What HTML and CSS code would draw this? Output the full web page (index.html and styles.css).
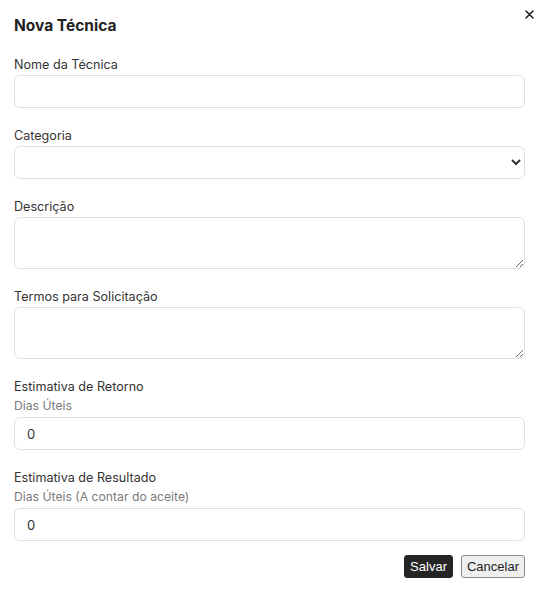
FILE: index.html
```html
<!DOCTYPE html>
<html lang="pt-br">
<head>
    <meta charset="UTF-8">
    <meta name="viewport" content="width=device-width, initial-scale=1.0">
    <title>Nova Técnica</title>
    <link rel="stylesheet" href="styles.css">
</head>
<body>

    <div class="modal">
        <button class="btn-fechar" type="button" aria-label="Fechar">
            <svg width="9" height="9" viewBox="0 0 9 9">
                <path d="M1 1 L8 8 M8 1 L1 8" stroke="#222" stroke-width="1.6" stroke-linecap="round"/>
            </svg>
        </button>

        <h2 class="titulo">Nova Técnica</h2>

        <div class="campo">
            <label for="nome">Nome da Técnica</label>
            <input type="text" id="nome">
        </div>

        <div class="campo">
            <label for="categoria">Categoria</label>
            <select id="categoria">
                <option></option>
            </select>
        </div>

        <div class="campo">
            <label for="descricao">Descrição</label>
            <textarea id="descricao"></textarea>
        </div>

        <div class="campo">
            <label for="termos">Termos para Solicitação</label>
            <textarea id="termos"></textarea>
        </div>

        <div class="campo">
            <label for="retorno">Estimativa de Retorno</label>
            <span class="dica">Dias Úteis</span>
            <input type="text" id="retorno" value="0">
        </div>

        <div class="campo">
            <label for="resultado">Estimativa de Resultado</label>
            <span class="dica">Dias Úteis (A contar do aceite)</span>
            <input type="text" id="resultado" value="0">
        </div>

        <div class="acoes">
            <button type="button" class="btn-salvar">Salvar</button>
            <button type="button" class="btn-cancelar">Cancelar</button>
        </div>
    </div>

</body>
</html>
```

FILE: styles.css
```css
body {
    margin: 0;
    font-family: Inter, 'Noto Sans', sans-serif;
    background-color: #ffffff;
    color: #333;
}
.modal {
    position: relative;
    padding: 14px 16px 14px 14px;
}
.btn-fechar {
    position: absolute;
    top: 5px;
    right: 2px;
    width: 20px;
    height: 18px;
    padding: 0;
    border: none;
    background: none;
    display: flex;
    align-items: center;
    justify-content: center;
    cursor: pointer;
}
.titulo {
    margin: 0 0 17px 0;
    font-size: 15.5px;
    line-height: 24px;
    font-weight: 700;
    color: #222;
}
.campo {
    display: flex;
    flex-direction: column;
    margin-bottom: 18px;
}
.campo label {
    font-size: 12.6px;
    line-height: 20px;
    color: #333;
}
.dica {
    font-size: 12.2px;
    line-height: 17px;
    color: #7a7a7a;
    margin-bottom: 3px;
}
.campo input,
.campo select,
.campo textarea {
    box-sizing: border-box;
    width: 100%;
    height: 33px;
    padding: 0 12px;
    border: 1px solid #dcdfe3;
    border-radius: 6px;
    font-family: Inter, 'Noto Sans', sans-serif;
    font-size: 13px;
    color: #333;
    background-color: #fff;
}
.campo textarea {
    height: 52px;
    padding: 6px 12px;
}
.acoes {
    display: flex;
    justify-content: flex-end;
    gap: 8px;
    margin-top: -4px;
}
.acoes button {
    font-family: 'Liberation Sans', Arial, sans-serif;
    font-size: 13px;
    height: 23px;
    padding: 0 5px;
    border-radius: 3px;
    cursor: pointer;
}
.btn-salvar {
    background-color: #252525;
    color: #fff;
    border: 1px solid #252525;
}
.btn-cancelar {
    background-color: #efefef;
    color: #222;
    border: 1px solid #8a8a8a;
}
```
